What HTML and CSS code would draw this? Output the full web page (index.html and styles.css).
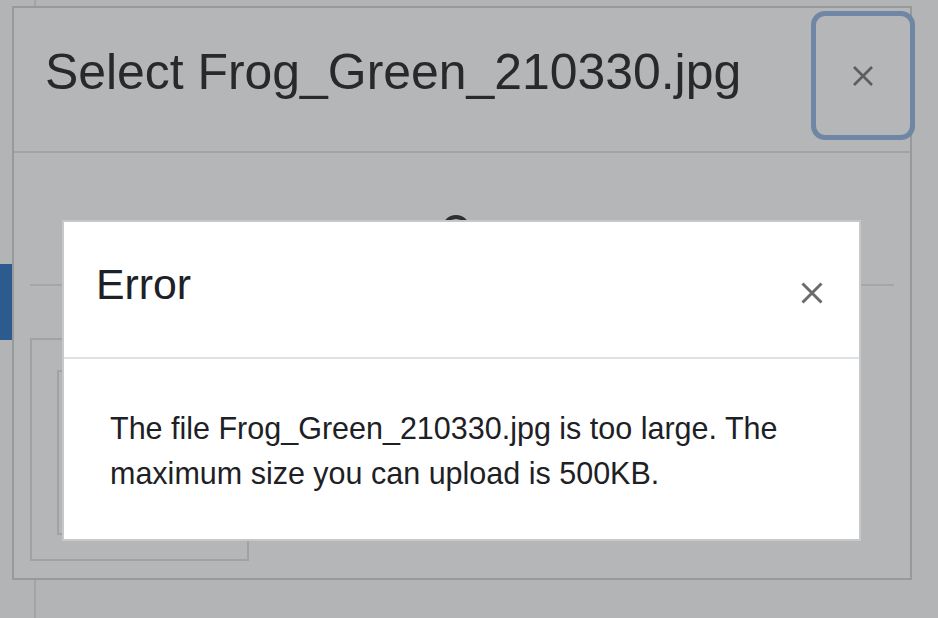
FILE: index.html
```html
<!DOCTYPE html>
<html lang="en">
<head>
<meta charset="utf-8">
<title>Select Frog_Green_210330.jpg</title>
<link rel="stylesheet" href="styles.css">
</head>
<body>
<div class="page">
  <div class="sidebar">
    <div class="nav-active"></div>
  </div>
  <div class="page-main"></div>
</div>

<div class="picker" role="dialog" aria-label="Select Frog_Green_210330.jpg">
  <div class="picker-header">
    <h3 class="picker-title">Select Frog_Green_210330.jpg</h3>
    <button class="picker-close" aria-label="Close">
      <svg width="22" height="22" viewBox="0 0 22 22"><path d="M2 2 L20 20 M20 2 L2 20" stroke="#5c5d5f" stroke-width="2.6" fill="none"/></svg>
    </button>
  </div>
  <div class="picker-body">
    <div class="spinner">
      <svg width="30" height="30" viewBox="0 0 30 30"><circle cx="15" cy="15" r="12" stroke="#2e2f31" stroke-width="4" fill="none"/></svg>
    </div>
    <div class="rule"></div>
    <div class="file-box">
      <div class="file-thumb"></div>
    </div>
  </div>
</div>

<div class="alert-dialog" role="alertdialog" aria-labelledby="err-title">
  <div class="alert-header">
    <h4 class="alert-title" id="err-title">Error</h4>
    <button class="alert-close" aria-label="Close">
      <svg width="22" height="22" viewBox="0 0 22 22"><path d="M1.5 1.5 L20.5 20.5 M20.5 1.5 L1.5 20.5" stroke="#6b6b6b" stroke-width="3" fill="none"/></svg>
    </button>
  </div>
  <div class="alert-body">
    <p>The file Frog_Green_210330.jpg is too large. The maximum size you can upload is 500KB.</p>
  </div>
</div>
</body>
</html>
```
FILE: styles.css
```css
* { box-sizing: border-box; }

html, body {
  margin: 0;
  padding: 0;
}

body {
  width: 938px;
  height: 618px;
  overflow: hidden;
  background: #b3b4b6;
  font-family: "Liberation Sans", Arial, sans-serif;
  color: #1d2125;
  position: relative;
}

/* underlying page (under backdrop) */
.page {
  display: flex;
  height: 618px;
}
.sidebar {
  width: 36px;
  border-right: 2px solid #a3a4a6;
  padding-top: 264px;
}
.nav-active {
  width: 12px;
  height: 76px;
  background: #2c5b8f;
}
.page-main { flex: 1; }

/* file picker modal */
.picker {
  position: absolute;
  left: 12px;
  top: 6px;
  width: 900px;
  height: 574px;
  border: 2px solid #98999b;
  background: #b5b6b8;
}
.picker-header {
  display: flex;
  align-items: flex-start;
  height: 145px;
  border-bottom: 2px solid #a2a3a5;
  padding-left: 31px;
}
.picker-title {
  margin: 35px 0 0;
  font-weight: 400;
  font-size: 49.9px;
  line-height: 1.2;
  color: #28292b;
  white-space: nowrap;
}
.picker-close {
  margin: 3px -5px 0 auto;
  width: 104px;
  height: 129px;
  border: 5px solid #6f87a4;
  border-radius: 14px;
  background: transparent;
  display: flex;
  align-items: center;
  justify-content: center;
  padding: 0;
}
.picker-body {
  padding: 0 16px;
}
.spinner {
  display: flex;
  justify-content: center;
  padding-top: 61px;
  padding-right: 13px;
  height: 131px;
}
.rule {
  height: 2px;
  background: #a5a6a8;
}
.file-box {
  margin-top: 52px;
  width: 219px;
  height: 223px;
  border: 2px solid #a1a2a4;
  padding: 30px 0 0 25px;
}
.file-thumb {
  width: 170px;
  height: 165px;
  border: 2px solid #a1a2a4;
}

/* error dialog */
.alert-dialog {
  position: absolute;
  left: 62px;
  top: 220px;
  width: 799px;
  height: 321px;
  background: #fff;
  border: 2px solid #c7c8ca;
}
.alert-header {
  display: flex;
  align-items: flex-start;
  height: 137px;
  border-bottom: 2px solid #dee2e6;
  padding-left: 32px;
}
.alert-title {
  margin: 37px 0 0;
  font-weight: 400;
  font-size: 42.8px;
  line-height: 1.2;
  color: #1d2125;
}
.alert-close {
  margin: 60px 36px 0 auto;
  width: 22px;
  height: 22px;
  padding: 0;
  border: 0;
  background: transparent;
  display: block;
}
.alert-close svg { display: block; }
.alert-body {
  padding: 47px 32px 0 46px;
}
.alert-body p {
  margin: 0;
  font-size: 30.5px;
  line-height: 45px;
  color: #1d2125;
}
```
